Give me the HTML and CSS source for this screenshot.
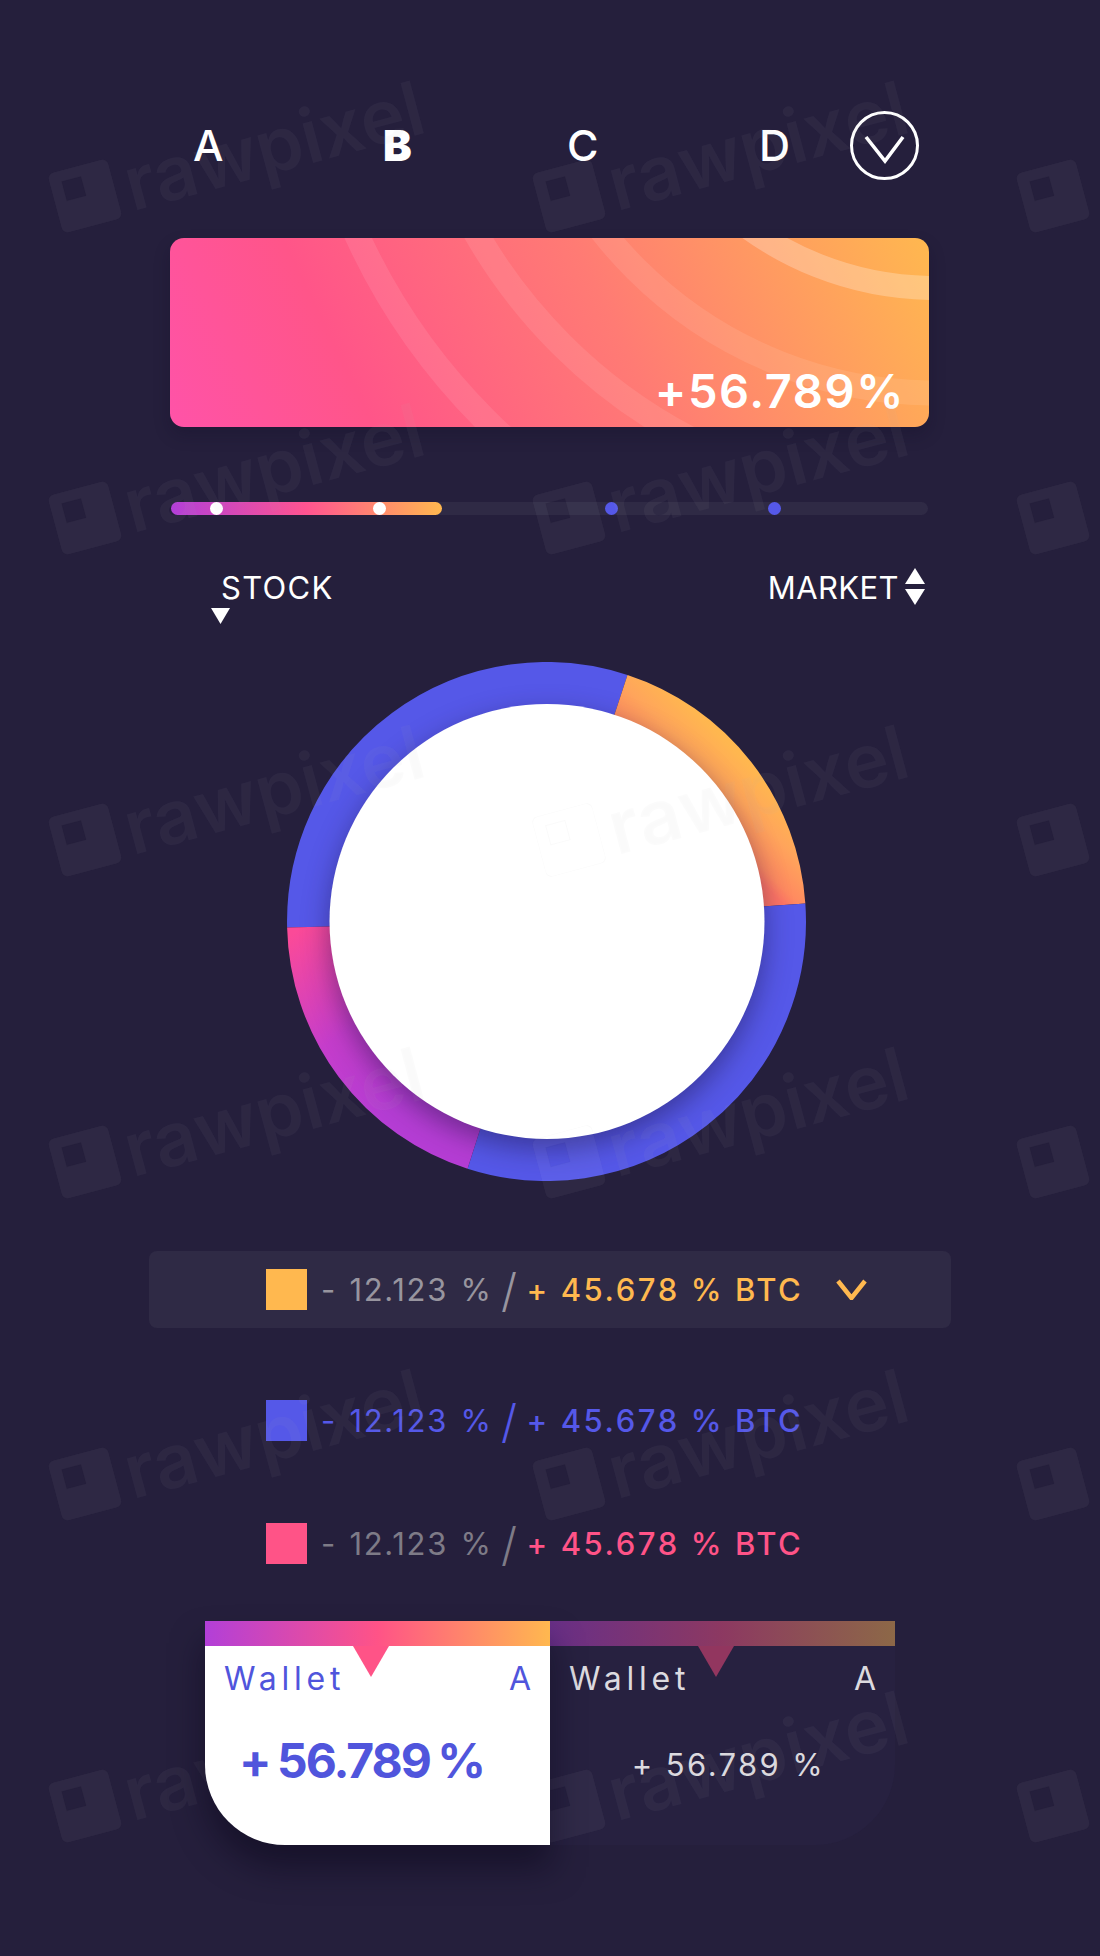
FILE: index.html
```html
<!DOCTYPE html>
<html lang="en">
<head>
<meta charset="utf-8">
<title>Wallet dashboard</title>
<link rel="stylesheet" href="styles.css">
</head>
<body>
<main class="page">
  <nav class="tabs">
    <span class="tab">A</span>
    <span class="tab tab-active">B</span>
    <span class="tab">C</span>
    <span class="tab">D</span>
    <svg class="tab-toggle" viewBox="0 0 69 69"><circle cx="34.5" cy="34.5" r="33" class="line-white"/><polyline points="16,26 35,50 53,26" class="line-white line-heavy"/></svg>
  </nav>

  <section class="hero">
    <svg class="hero-arcs" viewBox="0 0 759 189" preserveAspectRatio="none">
      <circle cx="765" cy="-268" r="318" class="arc arc-strong"/>
      <circle cx="765" cy="-268" r="423" class="arc"/>
      <circle cx="765" cy="-268" r="529" class="arc"/>
      <circle cx="765" cy="-268" r="636" class="arc"/>
    </svg>
    <span class="hero-value">+56.789%</span>
  </section>

  <div class="progress">
    <div class="progress-fill"></div>
    <span class="dot dot-white dot-1"></span>
    <span class="dot dot-white dot-2"></span>
    <span class="dot dot-blue dot-3"></span>
    <span class="dot dot-blue dot-4"></span>
  </div>

  <div class="labels">
    <div class="label-stock">
      <span class="label-text">STOCK</span>
      <svg class="tri-stock" viewBox="0 0 19 16"><polygon points="0,0 19,0 9.5,16"/></svg>
    </div>
    <div class="label-market">
      <span class="label-text">MARKET</span>
      <svg class="tri-market" viewBox="0 0 20 37"><polygon points="10,0 20,16 0,16"/><polygon points="0,21 20,21 10,37"/></svg>
    </div>
  </div>

  <div class="donut">
    <svg class="donut-svg" viewBox="0 0 519 519">
      <defs>
        <linearGradient id="gOrange" gradientUnits="userSpaceOnUse" x1="420" y1="166" x2="473" y2="113">
          <stop offset="0" stop-color="#ff7565"/><stop offset="0.15" stop-color="#ff8a60"/><stop offset="0.57" stop-color="#ffa55b"/><stop offset="1" stop-color="#ffb74f"/>
        </linearGradient>
        <linearGradient id="gPurple" gradientUnits="userSpaceOnUse" x1="15" y1="265" x2="130" y2="430">
          <stop offset="0" stop-color="#fb4a98"/><stop offset="0.55" stop-color="#c53dcb"/><stop offset="1" stop-color="#b53dd4"/>
        </linearGradient>
      </defs>
      <path class="seg seg-blue" d="M21.6 264.9A238 238 0 0 1 333.8 33.4"/>
      <path class="seg seg-orange" d="M333.8 33.4A238 238 0 0 1 496.9 242.9"/>
      <path class="seg seg-blue" d="M496.9 242.9A238 238 0 0 1 187.1 486.2"/>
      <path class="seg seg-purple" d="M187.1 486.2A238 238 0 0 1 21.6 264.9"/>
      <circle class="donut-hole" cx="260" cy="259.5" r="217.5"/>
    </svg>
  </div>

  <section class="legend">
    <div class="legend-row legend-open">
      <span class="swatch swatch-orange"></span>
      <span class="neg neg-light">- 12.123 %</span>
      <span class="slash neg-light">/</span>
      <span class="pos pos-orange">+ 45.678 % BTC</span>
      <svg class="legend-chevron" viewBox="0 0 31 21"><polyline points="2,2 15.5,19 29,2"/></svg>
    </div>
    <div class="legend-row legend-second">
      <span class="swatch swatch-blue"></span>
      <span class="neg pos-blue">- 12.123 %</span>
      <span class="slash pos-blue">/</span>
      <span class="pos pos-blue">+ 45.678 % BTC</span>
    </div>
    <div class="legend-row legend-third">
      <span class="swatch swatch-pink"></span>
      <span class="neg neg-dim">- 12.123 %</span>
      <span class="slash neg-dim">/</span>
      <span class="pos pos-pink">+ 45.678 % BTC</span>
    </div>
  </section>

  <section class="wallets">
    <article class="wallet wallet-active">
      <div class="wallet-bar"></div>
      <div class="wallet-notch"></div>
      <header class="wallet-head"><span>Wallet</span><span class="wallet-letter">A</span></header>
      <div class="wallet-value">+ 56.789 %</div>
    </article>
    <article class="wallet wallet-idle">
      <div class="wallet-bar"></div>
      <div class="wallet-notch"></div>
      <header class="wallet-head"><span>Wallet</span><span class="wallet-letter">A</span></header>
      <div class="wallet-value">+ 56.789 %</div>
    </article>
  </section>
</main>

<div class="marks" aria-hidden="true">
  <div class="mark"><svg class="mark-logo" viewBox="0 0 56 56"><path fill-rule="evenodd" d="M6 0H50a6 6 0 0 1 6 6V50a6 6 0 0 1-6 6H6a6 6 0 0 1-6-6V6a6 6 0 0 1 6-6ZM11 10v18h18V10Z"/></svg><span>rawpixel</span></div>
  <div class="mark"><svg class="mark-logo" viewBox="0 0 56 56"><path fill-rule="evenodd" d="M6 0H50a6 6 0 0 1 6 6V50a6 6 0 0 1-6 6H6a6 6 0 0 1-6-6V6a6 6 0 0 1 6-6ZM11 10v18h18V10Z"/></svg><span>rawpixel</span></div>
  <div class="mark"><svg class="mark-logo" viewBox="0 0 56 56"><path fill-rule="evenodd" d="M6 0H50a6 6 0 0 1 6 6V50a6 6 0 0 1-6 6H6a6 6 0 0 1-6-6V6a6 6 0 0 1 6-6ZM11 10v18h18V10Z"/></svg></div>
  <div class="mark"><svg class="mark-logo" viewBox="0 0 56 56"><path fill-rule="evenodd" d="M6 0H50a6 6 0 0 1 6 6V50a6 6 0 0 1-6 6H6a6 6 0 0 1-6-6V6a6 6 0 0 1 6-6ZM11 10v18h18V10Z"/></svg><span>rawpixel</span></div>
  <div class="mark"><svg class="mark-logo" viewBox="0 0 56 56"><path fill-rule="evenodd" d="M6 0H50a6 6 0 0 1 6 6V50a6 6 0 0 1-6 6H6a6 6 0 0 1-6-6V6a6 6 0 0 1 6-6ZM11 10v18h18V10Z"/></svg><span>rawpixel</span></div>
  <div class="mark"><svg class="mark-logo" viewBox="0 0 56 56"><path fill-rule="evenodd" d="M6 0H50a6 6 0 0 1 6 6V50a6 6 0 0 1-6 6H6a6 6 0 0 1-6-6V6a6 6 0 0 1 6-6ZM11 10v18h18V10Z"/></svg></div>
  <div class="mark"><svg class="mark-logo" viewBox="0 0 56 56"><path fill-rule="evenodd" d="M6 0H50a6 6 0 0 1 6 6V50a6 6 0 0 1-6 6H6a6 6 0 0 1-6-6V6a6 6 0 0 1 6-6ZM11 10v18h18V10Z"/></svg><span>rawpixel</span></div>
  <div class="mark"><svg class="mark-logo" viewBox="0 0 56 56"><path fill-rule="evenodd" d="M6 0H50a6 6 0 0 1 6 6V50a6 6 0 0 1-6 6H6a6 6 0 0 1-6-6V6a6 6 0 0 1 6-6ZM11 10v18h18V10Z"/></svg><span>rawpixel</span></div>
  <div class="mark"><svg class="mark-logo" viewBox="0 0 56 56"><path fill-rule="evenodd" d="M6 0H50a6 6 0 0 1 6 6V50a6 6 0 0 1-6 6H6a6 6 0 0 1-6-6V6a6 6 0 0 1 6-6ZM11 10v18h18V10Z"/></svg></div>
  <div class="mark"><svg class="mark-logo" viewBox="0 0 56 56"><path fill-rule="evenodd" d="M6 0H50a6 6 0 0 1 6 6V50a6 6 0 0 1-6 6H6a6 6 0 0 1-6-6V6a6 6 0 0 1 6-6ZM11 10v18h18V10Z"/></svg><span>rawpixel</span></div>
  <div class="mark"><svg class="mark-logo" viewBox="0 0 56 56"><path fill-rule="evenodd" d="M6 0H50a6 6 0 0 1 6 6V50a6 6 0 0 1-6 6H6a6 6 0 0 1-6-6V6a6 6 0 0 1 6-6ZM11 10v18h18V10Z"/></svg><span>rawpixel</span></div>
  <div class="mark"><svg class="mark-logo" viewBox="0 0 56 56"><path fill-rule="evenodd" d="M6 0H50a6 6 0 0 1 6 6V50a6 6 0 0 1-6 6H6a6 6 0 0 1-6-6V6a6 6 0 0 1 6-6ZM11 10v18h18V10Z"/></svg></div>
  <div class="mark"><svg class="mark-logo" viewBox="0 0 56 56"><path fill-rule="evenodd" d="M6 0H50a6 6 0 0 1 6 6V50a6 6 0 0 1-6 6H6a6 6 0 0 1-6-6V6a6 6 0 0 1 6-6ZM11 10v18h18V10Z"/></svg><span>rawpixel</span></div>
  <div class="mark"><svg class="mark-logo" viewBox="0 0 56 56"><path fill-rule="evenodd" d="M6 0H50a6 6 0 0 1 6 6V50a6 6 0 0 1-6 6H6a6 6 0 0 1-6-6V6a6 6 0 0 1 6-6ZM11 10v18h18V10Z"/></svg><span>rawpixel</span></div>
  <div class="mark"><svg class="mark-logo" viewBox="0 0 56 56"><path fill-rule="evenodd" d="M6 0H50a6 6 0 0 1 6 6V50a6 6 0 0 1-6 6H6a6 6 0 0 1-6-6V6a6 6 0 0 1 6-6ZM11 10v18h18V10Z"/></svg></div>
  <div class="mark"><svg class="mark-logo" viewBox="0 0 56 56"><path fill-rule="evenodd" d="M6 0H50a6 6 0 0 1 6 6V50a6 6 0 0 1-6 6H6a6 6 0 0 1-6-6V6a6 6 0 0 1 6-6ZM11 10v18h18V10Z"/></svg><span>rawpixel</span></div>
  <div class="mark"><svg class="mark-logo" viewBox="0 0 56 56"><path fill-rule="evenodd" d="M6 0H50a6 6 0 0 1 6 6V50a6 6 0 0 1-6 6H6a6 6 0 0 1-6-6V6a6 6 0 0 1 6-6ZM11 10v18h18V10Z"/></svg><span>rawpixel</span></div>
  <div class="mark"><svg class="mark-logo" viewBox="0 0 56 56"><path fill-rule="evenodd" d="M6 0H50a6 6 0 0 1 6 6V50a6 6 0 0 1-6 6H6a6 6 0 0 1-6-6V6a6 6 0 0 1 6-6ZM11 10v18h18V10Z"/></svg></div>
</div>
</body>
</html>
```
FILE: styles.css
```css
* { box-sizing: border-box; }
html, body { margin: 0; padding: 0; }
body {
  position: relative;
  width: 1100px;
  height: 1956px;
  overflow: hidden;
  background: #251f3c;
  font-family: Inter, "Liberation Sans", sans-serif;
  color: #fff;
}
.page { padding-top: 111px; }

/* tabs */
.tabs {
  display: grid;
  grid-template-columns: 190px 184px 192px 91px 69px;
  align-items: center;
  height: 69px;
  padding-left: 193px;
}
.tab { font-size: 43px; line-height: 69px; font-weight: 500; }
.tab-active { font-weight: 900; }
.tab-toggle { width: 69px; height: 69px; display: block; }
.line-white { fill: none; stroke: #fff; stroke-width: 3; }
.line-heavy { stroke-width: 3.6; }

/* hero */
.hero {
  position: relative;
  width: 759px;
  height: 189px;
  margin: 58px 0 0 170px;
  border-radius: 14px;
  overflow: hidden;
  background: linear-gradient(64deg, #ff53a8 0%, #ff5589 24%, #ff7b74 58%, #ffb84f 100%);
  display: flex;
  align-items: flex-end;
  justify-content: flex-end;
  box-shadow: 0 8px 16px rgba(15, 10, 35, .25);
}
.hero-arcs { position: absolute; inset: 0; width: 100%; height: 100%; }
.arc { fill: none; stroke: #fff; stroke-width: 25; opacity: .09; }
.arc-strong { stroke-width: 24; opacity: .25; }
.hero-value {
  position: relative;
  font-size: 47px;
  line-height: 47px;
  font-weight: 600;
  letter-spacing: 1.6px;
  padding: 0 24px 13px 0;
}

/* progress */
.progress {
  position: relative;
  width: 757px;
  height: 13px;
  margin: 75px 0 0 171px;
  border-radius: 7px;
  background: #2f2a45;
}
.progress-fill {
  width: 271px;
  height: 13px;
  border-radius: 7px;
  background: linear-gradient(90deg, #b23fd8 0%, #ff5490 50%, #ffb84f 100%);
}
.dot { position: absolute; top: 0; width: 13px; height: 13px; border-radius: 50%; }
.dot-white { background: #fff; }
.dot-blue { background: #5558e8; }
.dot-1 { left: 39px; }
.dot-2 { left: 202px; }
.dot-3 { left: 434px; }
.dot-4 { left: 597px; }

/* labels */
.labels {
  display: flex;
  justify-content: space-between;
  width: 714px;
  height: 56px;
  margin: 53px 0 0 211px;
}
.label-stock { display: flex; flex-direction: column; padding-top: 4px; }
.label-text { font-size: 31px; line-height: 31px; }
.label-stock .label-text { margin-left: 10px; letter-spacing: 1.3px; }
.tri-stock { width: 19px; height: 16px; display: block; margin-top: 5px; fill: #fff; }
.label-market { display: flex; align-items: flex-start; gap: 6px; }
.label-market .label-text { margin-top: 4px; letter-spacing: .4px; }
.tri-market { width: 20px; height: 37px; display: block; fill: #fff; }

/* donut */
.donut { width: 519px; height: 519px; margin: 38px 0 0 287px; }
.donut-svg { display: block; width: 519px; height: 519px; }
.seg { fill: none; stroke-width: 43; }
.seg-blue { stroke: #5558e8; }
.seg-orange { stroke: url(#gOrange); }
.seg-purple { stroke: url(#gPurple); }
.donut-hole { fill: #fff; filter: drop-shadow(0 10px 14px rgba(25, 15, 60, .45)); }

/* legend */
.legend { width: 802px; margin: 70px 0 0 149px; }
.legend-row {
  display: flex;
  align-items: center;
  height: 77px;
  padding-left: 117px;
  font-size: 31px;
  border-radius: 8px;
}
.legend-open { background: #2f2a45; }
.legend-second { margin-top: 54px; }
.legend-third { margin-top: 46px; }
.swatch { width: 41px; height: 41px; flex: none; margin-right: 14px; }
.swatch-orange { background: #ffb84f; }
.swatch-blue { background: #5558e8; }
.swatch-pink { background: #ff5387; }
.neg { width: 180px; white-space: pre; letter-spacing: 1.7px; word-spacing: 2px; }
.slash { width: 25.5px; font-size: 46px; font-weight: 300; line-height: 46px; }
.pos { white-space: pre; letter-spacing: 2.6px; font-weight: 500; }
.neg-light { color: #98959f; }
.neg-dim { color: #7e7b87; }
.pos-orange { color: #ffb84f; }
.pos-blue { color: #5558e8; }
.pos-pink { color: #ff5387; }
.legend-chevron { width: 31px; height: 21px; margin-left: 33px; fill: none; stroke: #ffb84f; stroke-width: 4.5; }

/* wallets */
.wallets { display: flex; width: 690px; margin: 39px 0 0 205px; }
.wallet { position: relative; width: 345px; height: 224px; }
.wallet-bar { height: 25px; background: linear-gradient(90deg, #b23fd8 0%, #ff5387 50%, #ffb84f 100%); }
.wallet-notch {
  position: absolute;
  top: 25px;
  width: 36px;
  height: 31px;
  clip-path: polygon(0 0, 100% 0, 50% 100%);
}
.wallet-head {
  display: flex;
  justify-content: space-between;
  padding: 17px 19px 0;
  font-size: 32px;
  line-height: 32px;
  letter-spacing: 4.8px;
}
.wallet-letter { letter-spacing: 0; }
.wallet-active {
  background: #fff;
  color: #5055dc;
  border-radius: 0 0 0 80px;
  box-shadow: 0 22px 32px rgba(10, 5, 25, .5);
  z-index: 1;
}
.wallet-active .wallet-notch { left: 148px; background: #ff5387; }
.wallet-idle {
  background: #272140;
  color: #dcdadf;
  border-radius: 0 0 80px 0;
}
.wallet-idle .wallet-bar { opacity: .47; }
.wallet-idle .wallet-notch { left: 148px; background: #92365f; }
.wallet-value { text-align: center; }
.wallet-active .wallet-value {
  margin-top: 42px;
  padding-right: 32px;
  font-size: 48px;
  line-height: 48px;
  font-weight: 700;
  letter-spacing: -2px;
  word-spacing: -2px;
}
.wallet-idle .wallet-value {
  margin-top: 54px;
  padding-left: 12px;
  font-size: 31px;
  line-height: 31px;
  letter-spacing: 2.4px;
}

/* watermark overlay */
.marks {
  position: absolute;
  inset: 0;
  display: grid;
  grid-template-columns: repeat(3, 484px);
  grid-auto-rows: 322px;
  padding: 146px 0 0 54px;
  pointer-events: none;
  color: rgba(255, 255, 255, .042);
  overflow: hidden;
}
.mark {
  display: flex;
  align-items: center;
  gap: 11px;
  height: 100px;
  transform: rotate(-15deg);
  transform-origin: 31px 50%;
  font-size: 75px;
  line-height: 100px;
  font-weight: 600;
  text-shadow: 0 0 1px rgba(0, 0, 0, .02);
}
.mark-logo { width: 62px; height: 62px; flex: none; fill: currentColor; stroke: rgba(0, 0, 0, .02); stroke-width: 1; }
```
